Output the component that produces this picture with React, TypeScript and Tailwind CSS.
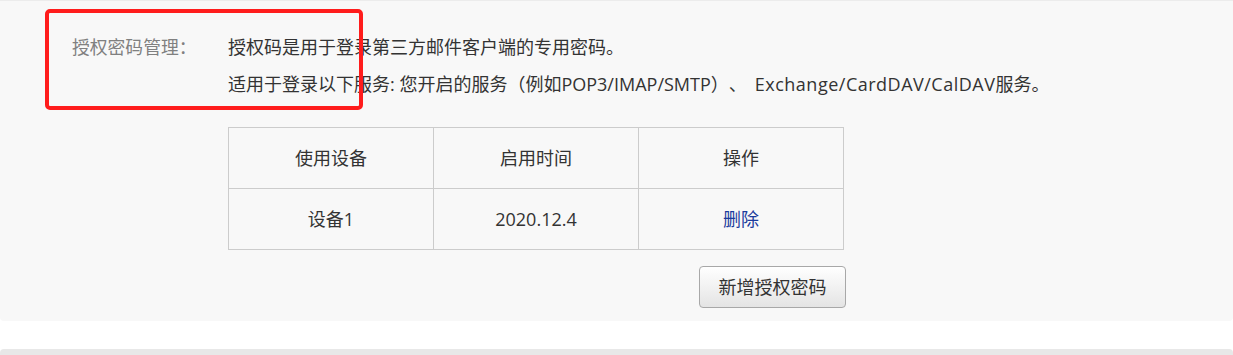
export default function App() {
  const font = { fontFamily: '"Open Sans", "Noto Sans CJK SC", sans-serif' }
  return (
    <div className="relative h-[355px] w-[1233px] overflow-hidden bg-white [text-spacing-trim:space-all]" style={font}>
      <div className="h-[1px] bg-[#ececec]" />
      <div className="relative h-[320px] rounded-b-[4px] bg-[#f8f8f8] pt-[30px]">
        <div className="flex pl-[72px]">
          <div className="w-[156px] text-[17.8px] leading-[33px] text-[#808080]">授权密码管理：</div>
          <div className="text-[18px] text-[#333]">
            <div className="leading-[33px]">授权码是用于登录第三方邮件客户端的专用密码。</div>
            <div className="mt-[4px] leading-[33px]">
              适用于登录以下服务: 您开启的服务（例如POP3/IMAP/SMTP）、
              <span className="ml-[8px] tracking-[0.5px]">Exchange/CardDAV/CalDAV</span>服务。
            </div>
          </div>
        </div>

        <div className="ml-[228px] mt-[26px] w-[616px]">
          <table className="w-full border-collapse text-center text-[18px] text-[#333]">
            <tbody>
              <tr className="h-[61px]">
                <td className="w-[205px] border border-[#cccccc]">使用设备</td>
                <td className="w-[205px] border border-[#cccccc]">启用时间</td>
                <td className="w-[205px] border border-[#cccccc]">操作</td>
              </tr>
              <tr className="h-[61px]">
                <td className="border border-[#cccccc]">设备1</td>
                <td className="border border-[#cccccc]">2020.12.4</td>
                <td className="border border-[#cccccc] text-[#1a3b9c]">删除</td>
              </tr>
            </tbody>
          </table>
          <div className="mt-[16px] flex justify-end">
            <button className="-mr-[2px] h-[42px] w-[147px] rounded-[4px] border border-[#a8a8a8] bg-gradient-to-b from-white to-[#e4e4e4] text-[18px] text-[#333]">
              新增授权密码
            </button>
          </div>
        </div>

        <div className="absolute left-[45px] top-[8px] h-[101px] w-[318px] rounded-[5px] border-[4px] border-[#ff1c1c]" />
      </div>
      <div className="mt-[28px] h-[10px] rounded-t-[4px] bg-[#e8e8e8]" />
    </div>
  )
}
